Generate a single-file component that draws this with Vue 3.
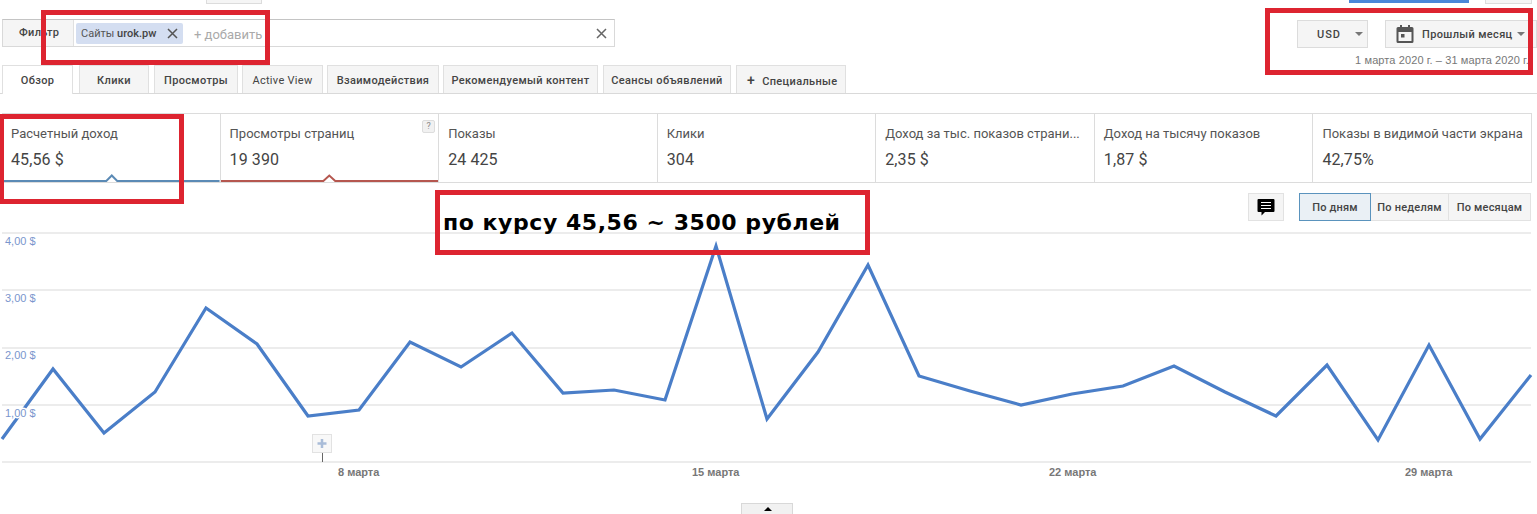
<script setup>
const tabs = ['Обзор', 'Клики', 'Просмотры', 'Active View', 'Взаимодействия', 'Рекомендуемый контент', 'Сеансы объявлений']
const metrics = [
  { label: 'Расчетный доход', value: '45,56 $', tone: 'blue' },
  { label: 'Просмотры страниц', value: '19 390', tone: 'red', help: true },
  { label: 'Показы', value: '24 425' },
  { label: 'Клики', value: '304' },
  { label: 'Доход за тыс. показов страни...', value: '2,35 $' },
  { label: 'Доход на тысячу показов', value: '1,87 $' },
  { label: 'Показы в видимой части экрана', value: '42,75%' },
]
const periods = ['По дням', 'По неделям', 'По месяцам']
const grid = [233, 290, 348, 405, 462]
const yLabels = [
  { y: 245, t: '4,00 $' }, { y: 302, t: '3,00 $' }, { y: 359, t: '2,00 $' }, { y: 417, t: '1,00 $' },
]
const xLabels = [
  { x: 338, t: '8 марта' }, { x: 692, t: '15 марта' }, { x: 1049, t: '22 марта' }, { x: 1405, t: '29 марта' },
]
const line = '2,439 53,369 104,433 155,392 206,308 257,344 308,416 359,410 410,342 461,367 512,333 563,393 614,390 665,400 716,246 767,419 818,352 868,265 919,376 970,391 1021,405 1072,394 1123,386 1174,366 1225,392 1276,416 1327,365 1378,440 1429,345 1480,439 1531,375'
</script>

<template>
  <div class="page">
    <div class="top-strip">
      <span class="stub stub-a"></span>
      <span class="stub-blue"></span>
      <span class="stub stub-c"></span>
    </div>

    <div class="toolbar">
      <div class="filter">
        <div class="filter-label">Фильтр</div>
        <div class="chip"><span>Сайты <b class="site">urok.pw</b></span>
          <svg class="chip-x" width="11" height="11" viewBox="0 0 11 11"><path d="M1 1l9 9M10 1l-9 9" stroke="#555" stroke-width="1.5" fill="none" /></svg>
        </div>
        <span class="add">+ добавить</span>
        <svg class="clear" width="11" height="11" viewBox="0 0 11 11"><path d="M1 1l9 9M10 1l-9 9" stroke="#666" stroke-width="1.5" fill="none" /></svg>
      </div>
      <div class="right-tools">
        <div class="drop usd">USD<i class="caret"></i></div>
        <div class="drop month">
          <svg width="18" height="20" viewBox="0 0 18 20"><path fill="#555" d="M4 1h2v2h6V1h2v2h2a1.500 1.500 0 0 1 1.500 1.500v13A1.500 1.500 0 0 1 16 19H2a1.500 1.500 0 0 1-1.500-1.500v-13A1.500 1.500 0 0 1 2 3h2zM2.500 8v9h13V8zM5 10h3.500v3.500H5z" /></svg>
          <span>Прошлый месяц</span><i class="caret"></i>
        </div>
      </div>
    </div>

    <div class="tabs-row">
      <div class="tabs">
        <div v-for="(t, i) in tabs" :key="t" class="tab" :class="{ active: i === 0 }">{{ t }}</div>
        <div class="tab custom"><b class="plus">+</b>Специальные</div>
      </div>
      <div class="dates">1 марта 2020 г. – 31 марта 2020 г.</div>
    </div>

    <div class="metrics">
      <div v-for="m in metrics" :key="m.label" class="metric">
        <div class="m-label">{{ m.label }}</div>
        <div class="m-value">{{ m.value }}</div>
        <span v-if="m.help" class="help">?</span>
        <svg v-if="m.tone" class="underline" width="100%" height="9" preserveAspectRatio="none" viewBox="0 0 219 9">
          <path :d="m.tone === 'blue' ? 'M0 7H105L110.500 1.500 116 7H219' : 'M0 7H103L109 1.500 115 7H219'" fill="none" :stroke="m.tone === 'blue' ? '#5b8ab5' : '#b5574f'" stroke-width="2" />
        </svg>
      </div>
    </div>

    <div class="controls">
      <div class="comment">
        <svg width="18" height="18" viewBox="0 0 18 18"><path d="M1.500 1h15a1 1 0 0 1 1 1v11a1 1 0 0 1-1 1H8l-3.500 3.500V14h-3a1 1 0 0 1-1-1V2a1 1 0 0 1 1-1z" fill="#000" /><path d="M4 4.500h10M4 7.500h10M4 10.500h10" stroke="#fff" stroke-width="1.200" /></svg>
      </div>
      <div class="segmented">
        <div v-for="(p, i) in periods" :key="p" class="seg" :class="{ on: i === 0 }">{{ p }}</div>
      </div>
    </div>

    <svg class="chart" width="1537" height="293" viewBox="0 221 1537 293">
      <line v-for="y in grid" :key="y" x1="2" x2="1531" :y1="y" :y2="y" stroke="#d9d9d9" />
      <polyline :points="line" fill="none" stroke="#4a7ec8" stroke-width="3.200" />
      <text v-for="l in yLabels" :key="l.t" x="5" :y="l.y" class="y-label">{{ l.t }}</text>
      <text v-for="l in xLabels" :key="l.t" :x="l.x" y="476" class="x-label">{{ l.t }}</text>
      <line x1="322.500" x2="322.500" y1="453" y2="462" stroke="#666" />
      <rect x="312.500" y="434.500" width="19" height="18" fill="#f8f8f8" stroke="#e2e2e2" />
      <path d="M322 439v9M317.500 443.500h9" stroke="#a9bcd8" stroke-width="2.500" />
    </svg>

    <div class="collapse"><i></i></div>

    <div class="mark mark-filter"></div>
    <div class="mark mark-date"></div>
    <div class="mark mark-income"></div>
    <div class="mark mark-note">по курсу 45,56 ~ 3500 рублей</div>
  </div>
</template>

<style>
html, body { margin: 0; background: #fff; }
</style>

<style scoped>
.page {
  position: relative;
  width: 1537px;
  height: 514px;
  overflow: hidden;
  background: #fff;
  font-family: Roboto, "Liberation Sans", sans-serif;
  color: #444;
}
.top-strip { position: relative; height: 3px; }
.stub { position: absolute; top: -2px; height: 4px; background: #f5f5f5; border: 1px solid #dcdcdc; }
.stub-a { left: 206px; width: 54px; }
.stub-c { left: 1485px; width: 45px; }
.stub-blue { position: absolute; top: 0; left: 1349px; width: 120px; height: 3px; background: #4a86d8; }

.toolbar {
  display: flex;
  justify-content: space-between;
  margin-top: 17px;
  padding: 0 0 0 2px;
  height: 28px;
}
.filter {
  display: flex;
  align-items: center;
  width: 613px;
  height: 28px;
  margin-top: -1px;
  box-sizing: border-box;
  border: 1px solid #d9d9d9;
  border-top-color: #c4c4c4;
}
.filter-label {
  width: 71px;
  height: 26px;
  flex: none;
  box-sizing: border-box;
  padding-left: 16px;
  line-height: 26px;
  background: #f5f5f5;
  border-right: 1px solid #e0e0e0;
  font-size: 11px;
  font-weight: 500;
  letter-spacing: .3px;
  color: #444;
}
.chip {
  display: flex;
  align-items: center;
  justify-content: space-between;
  width: 107px;
  height: 21px;
  box-sizing: border-box;
  margin-left: 2px;
  padding: 0 5px;
  background: #d4def1;
  border-radius: 2px;
  font-size: 11px;
  color: #555;
}
.site { font-weight: 500; color: #444; }
.add { margin-left: 11px; margin-top: 3px; font-size: 13px; color: #aaa; }
.clear { margin-left: auto; margin-right: 7px; }
.right-tools { display: flex; gap: 17px; }
.drop {
  display: flex;
  align-items: center;
  height: 28px;
  box-sizing: border-box;
  background: #f5f5f5;
  border: 1px solid #dcdcdc;
  font-size: 11px;
  font-weight: 500;
  letter-spacing: .35px;
  color: #444;
}
.usd { width: 71px; padding-left: 19px; letter-spacing: 1px; }
.usd .caret { margin-left: 14px; }
.month { width: 152px; padding-left: 10px; gap: 8px; }
.month .caret { margin-left: -4px; }
.caret {
  width: 0;
  height: 0;
  border: 4px solid transparent;
  border-top: 4px solid #777;
  border-bottom: 0;
}

.tabs-row {
  position: relative;
  height: 28px;
  margin-top: 17px;
  border-bottom: 1px solid #d9d9d9;
  box-sizing: content-box;
}
.tabs { display: flex; padding-left: 2px; }
.tab {
  height: 28px;
  box-sizing: border-box;
  margin-right: 5px;
  line-height: 29px;
  text-align: center;
  background: #f5f5f5;
  border: 1px solid #e0e0e0;
  border-bottom: 0;
  font-size: 11px;
  font-weight: 500;
  letter-spacing: .35px;
  color: #444;
  white-space: nowrap;
}
.tab:nth-child(1) { width: 71px; margin-right: 6px; }
.tab:nth-child(2) { width: 70px; }
.tab:nth-child(3) { width: 84px; margin-right: 4px; }
.tab:nth-child(4) { width: 81px; margin-right: 4px; font-weight: 400; letter-spacing: .3px; }
.tab:nth-child(5) { width: 112px; margin-right: 4px; }
.tab:nth-child(6) { width: 155px; }
.tab:nth-child(7) { width: 128px; }
.tab.active { background: #fff; height: 29px; position: relative; z-index: 1; }
.custom { width: 110px; text-align: left; padding-left: 10px; }
.plus { margin-right: 7px; font-size: 14px; font-weight: 500; }
.dates {
  position: absolute;
  top: -11px;
  right: 8px;
  font-family: "Liberation Sans", Arial, sans-serif;
  font-size: 11px;
  letter-spacing: .1px;
  color: #777;
  white-space: nowrap;
}

.metrics {
  display: grid;
  grid-template-columns: repeat(7, 1fr);
  width: 1530px;
  height: 70px;
  margin: 19px 0 0 2px;
  box-sizing: border-box;
  border-top: 1px solid #dcdcdc;
  border-bottom: 1px solid #dcdcdc;
}
.metric {
  position: relative;
  box-sizing: border-box;
  padding: 12px 0 0 9px;
  border-right: 1px solid #dcdcdc;
  min-width: 0;
}
.m-label { font-size: 13px; line-height: 15px; color: #555; white-space: nowrap; }
.m-value { margin-top: 9px; font-size: 16px; line-height: 20px; letter-spacing: .1px; color: #444; }
.help {
  position: absolute;
  top: 6px;
  right: 3px;
  width: 11px;
  height: 11px;
  font-size: 9px;
  line-height: 11px;
  text-align: center;
  color: #888;
  background: #f1f1f1;
  border: 1px solid #ddd;
  border-radius: 2px;
}
.underline { position: absolute; left: 0; right: 0; bottom: -1px; display: block; }

.controls {
  display: flex;
  justify-content: flex-end;
  gap: 15px;
  width: 1531px;
  height: 28px;
  margin-top: 10px;
  box-sizing: border-box;
}
.comment {
  display: flex;
  align-items: center;
  justify-content: center;
  width: 36px;
  box-sizing: border-box;
  background: #f5f5f5;
  border: 1px solid #e2e2e2;
}
.segmented { display: flex; }
.seg {
  box-sizing: border-box;
  width: 78px;
  border: 1px solid #e2e2e2;
  border-left: 0;
  background: #f5f5f5;
  line-height: 27px;
  text-align: center;
  font-size: 11px;
  font-weight: 500;
  letter-spacing: .2px;
  color: #444;
}
.seg:last-child { width: 82px; }
.seg.on { width: 72px; background: #eaf0f5; border: 1px solid #5a93bd; }

.chart { display: block; margin-top: 0; }
.y-label {
  font: 11px "Liberation Sans", Arial, sans-serif;
  fill: #7a96cd;
  stroke: #fff;
  stroke-width: 3px;
  paint-order: stroke;
}
.x-label { font: 700 11px "Liberation Sans", Arial, sans-serif; fill: #777; }

.collapse {
  position: absolute;
  left: 741px;
  bottom: -3px;
  width: 52px;
  height: 14px;
  box-sizing: border-box;
  background: #f1f1f1;
  border: 1px solid #d8d8d8;
}
.collapse i {
  position: absolute;
  left: 22px;
  top: 3px;
  width: 0;
  height: 0;
  border: 4px solid transparent;
  border-top: 0;
  border-bottom: 4px solid #000;
}

.mark { position: absolute; box-sizing: border-box; border: 5px solid #dd2430; }
.mark-filter { left: 41px; top: 10px; width: 229px; height: 55px; }
.mark-date { left: 1265px; top: 8px; width: 268px; height: 67px; }
.mark-income { left: -1px; top: 114px; width: 185px; height: 90px; }
.mark-note {
  left: 435px;
  top: 190px;
  width: 435px;
  height: 65px;
  padding: 14px 0 0 3px;
  font-family: "DejaVu Sans", Verdana, sans-serif;
  font-weight: 700;
  font-size: 22px;
  letter-spacing: .55px;
  line-height: 28px;
  color: #000;
  white-space: nowrap;
}
</style>
